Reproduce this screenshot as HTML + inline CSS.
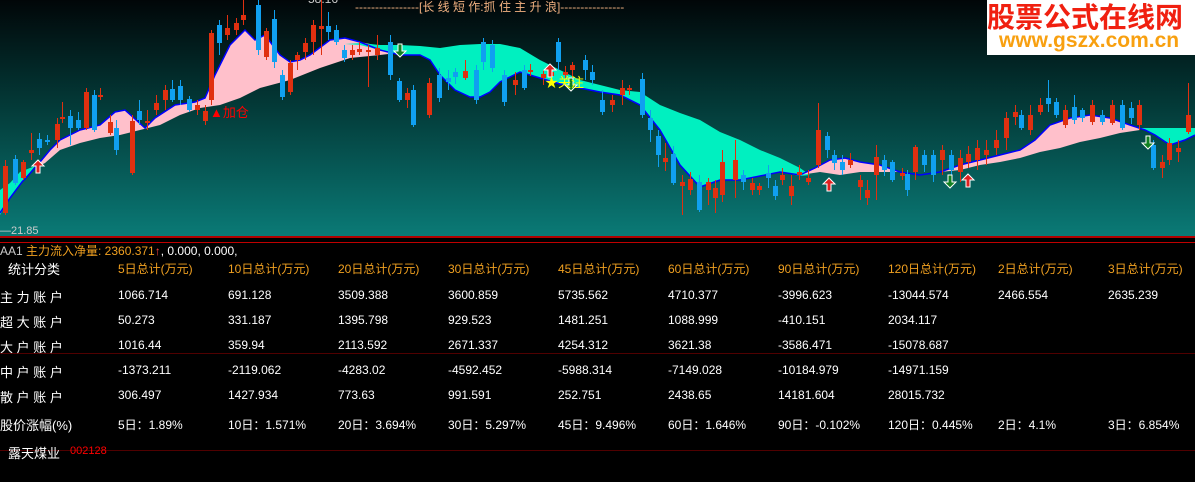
<!DOCTYPE html>
<html><head><meta charset="utf-8">
<style>
body{margin:0;width:1195px;height:482px;background:#000;overflow:hidden;position:relative;font-family:"Liberation Sans","Noto Sans CJK SC",sans-serif;}
#chart{position:absolute;left:0;top:0;width:1195px;height:236px;background:linear-gradient(#010608 0%,#033a38 45%,#0a7a76 100%);}
.t{position:absolute;white-space:nowrap;font-size:12px;color:#fff;}
.h{color:#f0a020;}
.lab{position:absolute;left:0;font-size:13px;color:#fff;white-space:pre;}
.line{position:absolute;left:0;width:1195px;}
</style></head><body>
<div id="chart">
<svg width="1195" height="236" style="position:absolute;left:0;top:0" id="svg">
<polygon fill="#00f0c0" points="0,215 0,190 10,183 20,172 35,166 22,182 10,198"/>
<polygon fill="#ffc0cb" points="35,168 50,150 60,140 80,130 100,125 115,112 125,110 145,128 155,118 175,105 195,102 205,98 215,75 230,45 245,30 255,40 265,35 280,55 290,62 300,60 310,55 330,40 345,38 360,42 375,45 395,50 405,50 405,52 380,55 350,58 320,68 290,80 260,88 240,98 220,105 200,108 180,115 160,125 140,130 120,135 100,138 80,143 60,150 45,163"/>
<polygon fill="#00f0c0" points="345,44 360,43 380,45 400,45 420,46 440,48 460,45 480,44 500,44 520,48 540,60 560,70 580,80 600,85 620,90 640,92 660,105 680,113 700,120 720,132 740,140 760,150 780,158 800,168 810,175 800,176 780,172 760,176 740,180 720,180 700,187 680,165 660,130 640,105 620,95 600,92 580,88 560,84 540,78 520,72 500,82 490,92 480,97 470,97 455,90 440,75 430,60 420,55 400,55 380,50 360,45"/>
<polygon fill="#ffc0cb" points="800,175 815,168 830,160 845,158 860,162 880,165 900,172 920,175 940,172 960,165 980,160 1000,155 1020,150 1035,140 1050,125 1070,118 1090,115 1110,118 1130,125 1140,128 1140,130 1120,133 1100,138 1080,142 1060,148 1040,152 1020,158 1000,162 980,165 960,170 940,172 920,175 900,172 880,172 860,172 840,175 820,172"/>
<polygon fill="#00f0c0" points="1140,128 1160,128 1195,128 1195,135 1185,140 1170,145 1155,135 1145,130"/>
<polyline fill="none" stroke="#0000ff" stroke-width="1.5" points="0,213 10,198 22,182 35,168 50,150 60,140 80,130 100,125 115,112 125,110 145,128 155,118 175,105 195,102 205,98 215,75 230,45 245,30 255,40 265,35 280,55 290,62 300,60 310,55 330,40 345,38 360,42 380,50 400,55 420,55 430,60 440,75 455,90 470,97 480,97 490,92 500,82 520,72 540,78 560,84 580,88 600,92 620,95 640,105 660,130 680,165 700,187 720,180 740,180 760,176 780,172 800,175 815,168 830,160 845,158 860,162 880,165 900,172 920,175 940,172 960,165 980,160 1000,155 1020,150 1035,140 1050,125 1070,118 1090,115 1110,118 1130,125 1145,130 1155,135 1170,145 1185,140 1195,135"/>
</svg>
<div class="t" style="left:355px;top:-2px;color:#f0b080;">----------------[长 线 短 作:抓 住 主 升 浪]----------------</div>
<div class="t" style="left:308px;top:-8px;color:#ccc;">58.16</div>
<div class="t" style="left:0;top:225px;color:#ccc;font-size:11px;">—21.85</div>
<div class="t" style="left:210px;top:102px;color:#f00;font-size:13px;">▲加仓</div>
<div class="t" style="left:545px;top:72px;color:#ff0;font-size:13px;">★关注</div>
<div style="position:absolute;left:987px;top:0;width:208px;height:55px;background:#fff;">
<div style="position:absolute;left:0;top:0;font-size:28px;font-weight:bold;color:#f02010;white-space:nowrap;font-family:'Noto Sans CJK SC',sans-serif;line-height:32px;">股票公式在线网</div>
<div style="position:absolute;left:12px;top:29px;font-size:21px;font-weight:bold;color:#f8a010;white-space:nowrap;line-height:24px;">www.gszx.com.cn</div>
</div>
</div>
<div class="line" style="top:236px;height:2px;background:#b00000"></div>
<div class="line" style="top:242px;height:1px;background:#c00000"></div>
<div class="t" style="left:0;top:242px;"><span style="color:#ccc">AA1 </span><span class="h">主力流入净量: 2360.371</span><span style="color:#f44">↑</span>, 0.000, 0.000,</div>
<div class="line" style="top:353px;height:1px;background:#500000"></div>
<div class="line" style="top:450px;height:1px;background:#500000"></div>
<div id="tbl"></div>
<script>
var cols=[118,228,338,448,558,668,778,888,998,1108];
var rows=[
["统计分类",268,true,["5日总计(万元)","10日总计(万元)","20日总计(万元)","30日总计(万元)","45日总计(万元)","60日总计(万元)","90日总计(万元)","120日总计(万元)","2日总计(万元)","3日总计(万元)"]],
["主 力 账 户",296,false,["1066.714","691.128","3509.388","3600.859","5735.562","4710.377","-3996.623","-13044.574","2466.554","2635.239"]],
["超 大 账 户",321,false,["50.273","331.187","1395.798","929.523","1481.251","1088.999","-410.151","2034.117"]],
["大 户 账 户",346,false,["1016.44","359.94","2113.592","2671.337","4254.312","3621.38","-3586.471","-15078.687"]],
["中 户 账 户",371,false,["-1373.211","-2119.062","-4283.02","-4592.452","-5988.314","-7149.028","-10184.979","-14971.159"]],
["散 户 账 户",396,false,["306.497","1427.934","773.63","991.591","252.751","2438.65","14181.604","28015.732"]],
["股价涨幅(%)",424,false,["5日：1.89%","10日：1.571%","20日：3.694%","30日：5.297%","45日：9.496%","60日：1.646%","90日：-0.102%","120日：0.445%","2日：4.1%","3日：6.854%"]]
];
var h="";
rows.forEach(function(r){
 var lx=r[0]=="统计分类"?8:0;
 h+='<div class="lab" style="left:'+lx+'px;top:'+(r[1]-9)+'px;">'+r[0]+'</div>';
 r[3].forEach(function(v,i){h+='<div class="t'+(r[2]?' h':'')+'" style="left:'+cols[i]+'px;top:'+(r[1]-8)+'px">'+v+'</div>';});
});
h+='<div class="t" style="left:8px;top:443px;font-size:13px">露天煤业</div><div class="t" style="left:70px;top:445px;color:#f00;font-size:11px">002128</div>';
document.getElementById("tbl").innerHTML=h;
var C=[[3,166,213,1,160,215],[13,159,183,0,155,185],[21,162,178,1,160,180],[29,150,153,1,133,160],[37,139,148,0,133,155],[45,140,142,0,135,145],[55,124,140,1,118,148],[60,117,118,1,102,123],[68,116,128,0,110,145],[76,120,128,0,112,130],[84,92,128,1,88,130],[92,95,130,0,90,132],[98,95,96,1,88,100],[108,122,133,1,115,135],[114,128,150,0,120,155],[130,121,173,1,115,175],[137,111,120,0,100,125],[145,121,122,1,110,130],[154,103,110,1,95,115],[163,90,100,1,85,110],[170,89,100,0,80,102],[178,86,100,0,80,105],[187,99,110,0,96,112],[195,105,110,1,100,115],[203,111,121,1,105,125],[209,33,100,1,30,105],[217,25,43,0,20,55],[225,28,35,1,15,40],[234,23,30,1,18,35],[241,15,20,1,0,25],[256,5,50,0,0,55],[264,31,57,1,28,60],[272,19,62,0,10,68],[280,75,97,0,70,100],[288,63,92,1,60,95],[295,55,60,1,52,70],[303,43,52,1,38,60],[311,25,42,1,20,55],[319,26,29,1,0,55],[326,26,32,0,12,40],[334,30,42,0,25,45],[342,50,58,0,45,62],[350,50,55,1,45,60],[357,49,52,1,42,55],[366,50,52,1,45,87],[375,48,55,1,35,60],[388,42,75,0,35,80],[397,81,100,0,78,102],[405,93,100,1,88,108],[411,90,125,0,85,127],[427,83,115,1,78,118],[437,75,98,0,68,102],[446,78,82,0,70,90],[453,72,77,0,68,84],[463,71,78,1,60,80],[474,70,100,0,65,104],[481,42,62,0,38,70],[490,45,68,0,40,72],[502,75,102,0,70,106],[513,80,85,1,72,95],[522,70,88,0,65,90],[528,70,72,1,64,76],[541,74,78,1,70,85],[549,72,76,1,68,80],[556,42,62,0,38,70],[563,72,75,1,66,78],[570,65,70,1,62,85],[583,60,70,0,55,80],[590,72,80,0,65,85],[600,100,112,0,90,115],[610,100,105,1,95,112],[620,88,95,1,80,105],[627,88,90,1,85,95],[640,79,115,0,73,118],[648,118,130,0,110,142],[656,136,155,0,130,167],[663,158,162,1,143,171],[671,154,183,0,146,185],[680,182,186,1,175,215],[688,179,190,1,172,195],[697,182,210,0,175,212],[706,182,190,1,178,205],[713,188,198,1,180,213],[720,162,195,1,150,202],[733,160,180,1,140,198],[741,175,182,0,170,190],[750,183,190,1,178,195],[757,186,190,1,183,195],[766,173,178,0,165,188],[773,186,196,0,180,200],[780,175,180,1,168,185],[789,186,196,1,175,205],[797,172,175,1,165,180],[806,178,182,1,170,185],[816,130,165,1,103,168],[825,136,150,0,132,158],[832,155,163,0,150,170],[840,162,170,0,155,175],[848,160,165,1,153,168],[858,180,187,1,175,200],[865,190,198,1,180,205],[874,157,175,1,145,200],[882,160,170,0,155,176],[890,162,180,0,160,182],[900,173,176,1,168,180],[905,174,190,0,170,196],[913,147,172,1,145,180],[922,155,165,0,150,172],[931,155,175,0,150,182],[940,150,160,1,145,175],[949,155,170,0,150,180],[958,158,172,1,150,182],[966,154,162,1,146,168],[975,148,160,1,140,170],[984,150,155,1,140,165],[994,140,148,1,130,155],[1004,118,138,1,112,150],[1013,112,117,1,105,125],[1019,115,128,0,110,130],[1028,115,130,1,105,135],[1038,105,112,1,98,115],[1046,98,104,0,80,112],[1054,102,115,0,98,118],[1063,110,125,1,105,128],[1072,107,120,0,95,124],[1080,110,118,0,108,122],[1090,105,122,1,100,125],[1100,115,122,0,110,125],[1110,105,123,1,100,125],[1120,105,128,0,100,130],[1129,108,118,0,102,124],[1137,105,125,1,100,130],[1151,145,168,0,140,170],[1160,162,168,1,155,178],[1167,143,160,1,138,165],[1176,148,152,1,140,162],[1186,115,132,1,83,134]];
var s="";
C.forEach(function(c){var col=c[3]?"#e03010":"#10a0f0";
s+='<line x1="'+(c[0]+2.5)+'" x2="'+(c[0]+2.5)+'" y1="'+c[4]+'" y2="'+c[5]+'" stroke="'+col+'" stroke-width="1"/>';
s+='<rect x="'+c[0]+'" y="'+c[1]+'" width="5" height="'+Math.max(2,c[2]-c[1])+'" fill="'+col+'"/>';});
[[32,160,1],[394,44,0],[544,64,1],[565,78,0],[823,178,1],[944,175,0],[962,174,1],[1142,136,0]].forEach(function(a){
 var x=a[0],y=a[1],p;
 if(a[2]) p=[[x+6,y],[x+12,y+6],[x+8,y+6],[x+8,y+13],[x+4,y+13],[x+4,y+6],[x,y+6]];
 else p=[[x+4,y],[x+8,y],[x+8,y+7],[x+12,y+7],[x+6,y+13],[x,y+7],[x+4,y+7]];
 s+='<polygon points="'+p.map(function(q){return q.join(",")}).join(" ")+'" fill="'+(a[2]?'#e02020':'#108020')+'" stroke="#fff" stroke-width="1"/>';});
document.getElementById("svg").insertAdjacentHTML("beforeend",s);
</script>
</body></html>
